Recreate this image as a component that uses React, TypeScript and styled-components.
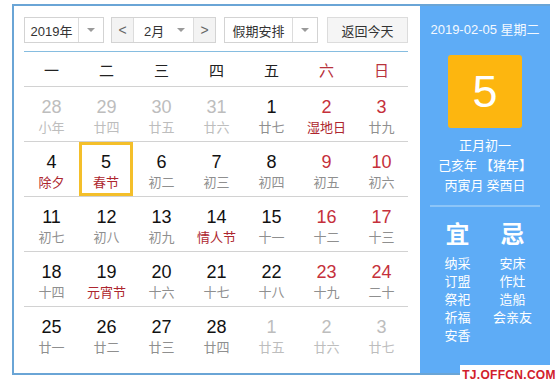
import React from "react";
import styled, { createGlobalStyle } from "styled-components";

const Global = createGlobalStyle`
  html, body { margin: 0; padding: 0; background: #fff; }
  body { font-family: "Liberation Sans", "Noto Sans CJK SC", sans-serif; }
`;

const Page = styled.div`
  position: relative;
  width: 558px;
  height: 384px;
  padding: 4px 0 0 12px;
  box-sizing: border-box;
`;

const Frame = styled.div`
  display: flex;
  width: 538px;
  height: 371px;
  box-sizing: border-box;
  border: 2px solid #6aa5d6;
  border-right: none;
`;

const Main = styled.div`
  width: 406px;
  padding: 11px 12px 0 10px;
  box-sizing: border-box;
`;

const Toolbar = styled.div`
  display: flex;
  align-items: stretch;
  height: 26px;
  font-size: 13px;
  color: #333;
`;

const SelectBox = styled.div<{ $w: number; $ml?: number }>`
  display: flex;
  width: ${(p) => p.$w}px;
  margin-left: ${(p) => p.$ml ?? 0}px;
  box-sizing: border-box;
  border: 1px solid #d3d3d3;
  background: #fff;
`;

const SelectText = styled.div`
  flex: 1;
  display: flex;
  align-items: center;
  justify-content: center;
`;

const SelectArrow = styled.div`
  width: 24px;
  border-left: 1px solid #dcdcdc;
  display: flex;
  align-items: center;
  justify-content: center;
  &::after {
    content: "";
    border-left: 4px solid transparent;
    border-right: 4px solid transparent;
    border-top: 4px solid #9a9a9a;
  }
`;

const MonthGroup = styled.div`
  display: flex;
  margin-left: 7px;
  width: 105px;
  box-sizing: border-box;
  border: 1px solid #d3d3d3;
`;

const NavBtn = styled.div`
  width: 21px;
  background: #f3f3f3;
  display: flex;
  align-items: center;
  justify-content: center;
  color: #666;
  font-size: 14px;
`;

const MonthSel = styled.div`
  flex: 1;
  display: flex;
  align-items: center;
  border-left: 1px solid #dcdcdc;
  border-right: 1px solid #dcdcdc;
  padding: 0 8px 0 10px;
  justify-content: space-between;
  &::after {
    content: "";
    border-left: 4px solid transparent;
    border-right: 4px solid transparent;
    border-top: 4px solid #9a9a9a;
  }
`;

const TodayBtn = styled.div`
  margin-left: 9px;
  width: 81px;
  box-sizing: border-box;
  border: 1px solid #dcdcdc;
  background: #f5f5f5;
  display: flex;
  align-items: center;
  justify-content: center;
`;

const HeadLine = styled.div`
  margin-top: 8px;
  height: 1px;
  background: #86bde0;
`;

const WeekHead = styled.div`
  display: grid;
  grid-template-columns: repeat(7, 55px);
  height: 34px;
  align-items: center;
  font-family: "Noto Sans CJK SC", sans-serif;
  font-size: 15px;
`;

const WeekName = styled.div<{ $red?: boolean }>`
  text-align: center;
  color: ${(p) => (p.$red ? "#b8323c" : "#222")};
`;

const WeekRow = styled.div<{ $first?: boolean }>`
  display: grid;
  grid-template-columns: repeat(7, 55px);
  height: 55px;
  box-sizing: border-box;
  border-top: 1px solid #d2d2d2;
`;

const Cell = styled.div<{ $today?: boolean }>`
  display: flex;
  flex-direction: column;
  align-items: center;
  box-sizing: border-box;
  padding-top: ${(p) => (p.$today ? 7 : 10)}px;
  border: ${(p) => (p.$today ? "3px solid #f4bf2a" : "none")};
  ${(p) => (p.$today ? "width: 54px;" : "")}
`;

const DayNum = styled.div<{ $tone: "n" | "r" | "o" }>`
  font-size: 18px;
  line-height: 20px;
  color: ${(p) => (p.$tone === "r" ? "#c5303b" : p.$tone === "o" ? "#bdbdbd" : "#111")};
`;

const Lunar = styled.div<{ $tone: "n" | "f" | "o" }>`
  font-family: "Noto Sans CJK SC", sans-serif;
  font-size: 13px;
  line-height: 20px;
  color: ${(p) => (p.$tone === "f" ? "#ad262e" : p.$tone === "o" ? "#bdbdbd" : "#8f8f8f")};
`;

const Side = styled.div`
  width: 130px;
  background: #5eacf6;
  color: #fff;
  display: flex;
  flex-direction: column;
  align-items: center;
  padding-top: 16px;
  box-sizing: border-box;
`;

const SideDate = styled.div`
  font-size: 13px;
  line-height: 16px;
  color: #f4f9ff;
`;

const BigDay = styled.div`
  margin-top: 17px;
  width: 74px;
  height: 73px;
  border-radius: 3px;
  background: #fdb60f;
  display: flex;
  align-items: center;
  justify-content: center;
  font-size: 45px;
  color: #fff;
`;

const LunarInfo = styled.div`
  margin-top: 7px;
  font-family: "Noto Sans CJK SC", sans-serif;
  font-size: 13px;
  line-height: 20px;
  text-align: center;
`;

const Divider = styled.div`
  margin-top: 10px;
  width: 110px;
  height: 2px;
  background: #8cc5f8;
`;

const YiJi = styled.div`
  margin-top: 6px;
  display: grid;
  grid-template-columns: 55px 55px;
  font-family: "Noto Sans CJK SC", sans-serif;
`;

const YiCol = styled.div`
  display: flex;
  flex-direction: column;
  align-items: center;
`;

const YiTitle = styled.div`
  font-size: 24px;
  font-weight: 700;
  line-height: 40px;
  margin-bottom: 1px;
`;

const YiItem = styled.div`
  font-size: 13px;
  line-height: 18px;
`;

const Watermark = styled.div`
  position: absolute;
  left: 460px;
  top: 365px;
  width: 98px;
  height: 19px;
  background: #fff;
  color: #d1202b;
  font-weight: 700;
  font-size: 12px;
  display: flex;
  align-items: center;
  justify-content: center;
  letter-spacing: 0.3px;
`;

type Day = { d: number; l: string; n?: "n" | "r" | "o"; lt?: "n" | "f" | "o"; today?: boolean };

const weeks: Day[][] = [
  [
    { d: 28, l: "小年", n: "o", lt: "o" },
    { d: 29, l: "廿四", n: "o", lt: "o" },
    { d: 30, l: "廿五", n: "o", lt: "o" },
    { d: 31, l: "廿六", n: "o", lt: "o" },
    { d: 1, l: "廿七" },
    { d: 2, l: "湿地日", n: "r", lt: "f" },
    { d: 3, l: "廿九", n: "r" },
  ],
  [
    { d: 4, l: "除夕", lt: "f" },
    { d: 5, l: "春节", lt: "f", today: true },
    { d: 6, l: "初二" },
    { d: 7, l: "初三" },
    { d: 8, l: "初四" },
    { d: 9, l: "初五", n: "r" },
    { d: 10, l: "初六", n: "r" },
  ],
  [
    { d: 11, l: "初七" },
    { d: 12, l: "初八" },
    { d: 13, l: "初九" },
    { d: 14, l: "情人节", lt: "f" },
    { d: 15, l: "十一" },
    { d: 16, l: "十二", n: "r" },
    { d: 17, l: "十三", n: "r" },
  ],
  [
    { d: 18, l: "十四" },
    { d: 19, l: "元宵节", lt: "f" },
    { d: 20, l: "十六" },
    { d: 21, l: "十七" },
    { d: 22, l: "十八" },
    { d: 23, l: "十九", n: "r" },
    { d: 24, l: "二十", n: "r" },
  ],
  [
    { d: 25, l: "廿一" },
    { d: 26, l: "廿二" },
    { d: 27, l: "廿三" },
    { d: 28, l: "廿四" },
    { d: 1, l: "廿五", n: "o", lt: "o" },
    { d: 2, l: "廿六", n: "o", lt: "o" },
    { d: 3, l: "廿七", n: "o", lt: "o" },
  ],
];

const weekNames = ["一", "二", "三", "四", "五", "六", "日"];

export default function App() {
  return (
    <Page>
      <Global />
      <Frame>
        <Main>
          <Toolbar>
            <SelectBox $w={80}>
              <SelectText>2019年</SelectText>
              <SelectArrow />
            </SelectBox>
            <MonthGroup>
              <NavBtn>&lt;</NavBtn>
              <MonthSel>2月</MonthSel>
              <NavBtn>&gt;</NavBtn>
            </MonthGroup>
            <SelectBox $w={94} $ml={8}>
              <SelectText>假期安排</SelectText>
              <SelectArrow />
            </SelectBox>
            <TodayBtn>返回今天</TodayBtn>
          </Toolbar>
          <HeadLine />
          <WeekHead>
            {weekNames.map((w, i) => (
              <WeekName key={w} $red={i >= 5}>
                {w}
              </WeekName>
            ))}
          </WeekHead>
          {weeks.map((wk, i) => (
            <WeekRow key={i}>
              {wk.map((day, j) => (
                <Cell key={j} $today={day.today}>
                  <DayNum $tone={day.n ?? "n"}>{day.d}</DayNum>
                  <Lunar $tone={day.lt ?? "n"}>{day.l}</Lunar>
                </Cell>
              ))}
            </WeekRow>
          ))}
        </Main>
        <Side>
          <SideDate>2019-02-05 星期二</SideDate>
          <BigDay>5</BigDay>
          <LunarInfo>
            <div>正月初一</div>
            <div>己亥年 【猪年】</div>
            <div>丙寅月 癸酉日</div>
          </LunarInfo>
          <Divider />
          <YiJi>
            <YiCol>
              <YiTitle>宜</YiTitle>
              {["纳采", "订盟", "祭祀", "祈福", "安香"].map((t) => (
                <YiItem key={t}>{t}</YiItem>
              ))}
            </YiCol>
            <YiCol>
              <YiTitle>忌</YiTitle>
              {["安床", "作灶", "造船", "会亲友"].map((t) => (
                <YiItem key={t}>{t}</YiItem>
              ))}
            </YiCol>
          </YiJi>
        </Side>
      </Frame>
      <Watermark>TJ.OFFCN.COM</Watermark>
    </Page>
  );
}
